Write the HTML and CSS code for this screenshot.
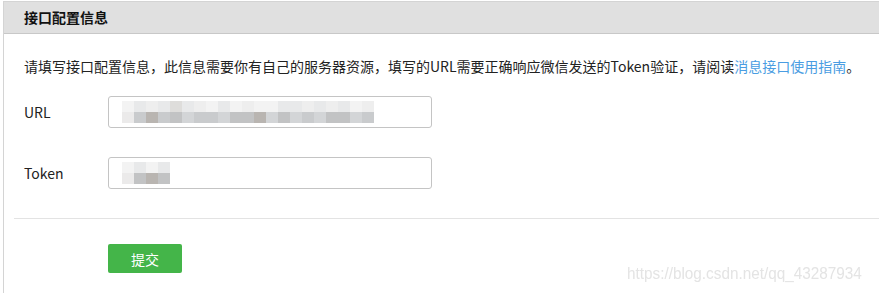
FILE: index.html
```html
<!DOCTYPE html>
<html lang="zh-CN">
<head>
<meta charset="utf-8">
<title>接口配置信息</title>
<link rel="stylesheet" href="styles.css">
</head>
<body>
<div class="panel">
  <div class="panel-head">接口配置信息</div>
  <div class="panel-body">
    <p class="desc">请填写接口配置信息，此信息需要你有自己的服务器资源，填写的URL需要正确响应微信发送的Token验证，请阅读<a class="link" href="#">消息接口使用指南</a>。</p>
    <div class="row">
      <label class="label">URL</label>
      <div class="input">
        <div class="mosaic">
          <div class="mrow top">
            <i class="c0"></i><i class="c1"></i><i class="c2"></i><i class="c1"></i><i class="c3"></i><i class="c1"></i><i class="c2"></i><i class="c0"></i><i class="c1"></i><i class="c0"></i><i class="c2"></i><i class="c0"></i><i class="c0"></i><i class="c1"></i><i class="c1"></i><i class="c2"></i><i class="c1"></i><i class="c2"></i><i class="c1"></i><i class="c0"></i><i class="c2"></i>
          </div>
          <div class="mrow bot">
            <i class="d0"></i><i class="d2"></i><i class="d4"></i><i class="d2"></i><i class="d3"></i><i class="d1"></i><i class="d2"></i><i class="d2"></i><i class="d1"></i><i class="d3"></i><i class="d3"></i><i class="d4"></i><i class="d1"></i><i class="d3"></i><i class="d1"></i><i class="d2"></i><i class="d1"></i><i class="d3"></i><i class="d3"></i><i class="d1"></i><i class="d2"></i>
          </div>
        </div>
      </div>
    </div>
    <div class="row">
      <label class="label">Token</label>
      <div class="input">
        <div class="mosaic">
          <div class="mrow top">
            <i class="c0"></i><i class="c1"></i><i class="c0"></i><i class="c1"></i>
          </div>
          <div class="mrow bot">
            <i class="d0"></i><i class="d3"></i><i class="d4"></i><i class="d3"></i>
          </div>
        </div>
      </div>
    </div>
    <div class="divider"></div>
    <div class="actions">
      <button class="btn" type="button">提交</button>
    </div>
  </div>
</div>
<div class="watermark">https://blog.csdn.net/qq_43287934</div>
</body>
</html>
```
FILE: styles.css
```css
html, body {
  margin: 0;
  padding: 0;
  background: #ffffff;
}
body {
  font-family: "Noto Sans CJK SC", "Noto Sans", sans-serif;
  font-size: 14px;
  color: #222222;
  height: 293px;
  overflow: hidden;
  position: relative;
}
.panel {
  margin: 1px 0 0 3px;
  border-top: 1px solid #d4d4d4;
  border-left: 1px solid #d4d4d4;
  height: 300px;
}
.panel-head {
  height: 31px;
  line-height: 31px;
  background: #e0e0e0;
  border-bottom: 1px solid #c8c8c8;
  padding-left: 20px;
  font-weight: bold;
  font-size: 14px;
  color: #111111;
}
.panel-body {
  padding-left: 20px;
}
.desc {
  margin: 22px 0 0 0;
  line-height: 20px;
  white-space: nowrap;
  color: #222222;
}
.link {
  color: #4a9de2;
  text-decoration: none;
}
.row {
  display: flex;
  align-items: center;
  margin-top: 20px;
}
.row + .row {
  margin-top: 29px;
}
.label {
  width: 84px;
  color: #222222;
}
.input {
  height: 30px;
  border: 1px solid #c4c4c4;
  border-radius: 3px;
  display: flex;
  align-items: center;
  padding-left: 13px;
  box-sizing: content-box;
  width: 309px;
}
.mosaic {
  display: flex;
  flex-direction: column;
  filter: blur(0.4px);
}
.mrow {
  display: flex;
}
.mrow i {
  display: block;
  width: 12px;
  height: 11px;
}
.c0 { background: #f3f3f3; }
.c1 { background: #e8e9ea; }
.c2 { background: #eeeeee; }
.c3 { background: #dedddb; }
.d0 { background: #ebeaea; }
.d1 { background: #d3d5d7; }
.d2 { background: #c9cbcd; }
.d3 { background: #c2c3c4; }
.d4 { background: #b9b5b1; }
.divider {
  height: 1px;
  background: #e3e3e3;
  margin: 29px 0 0 -10px;
}
.actions {
  padding: 25px 0 0 84px;
}
.btn {
  width: 74px;
  height: 29px;
  border: none;
  border-radius: 2px;
  background: #44b549;
  color: #ffffff;
  font-family: "Noto Sans CJK SC", sans-serif;
  font-size: 14px;
  padding: 0;
  cursor: pointer;
}
.watermark {
  position: absolute;
  left: 627px;
  top: 263px;
  font-family: "Liberation Sans", sans-serif;
  font-size: 17px;
  line-height: 22px;
  color: #e4e4e4;
  white-space: nowrap;
  transform: scaleX(0.9);
  transform-origin: left center;
}
```
